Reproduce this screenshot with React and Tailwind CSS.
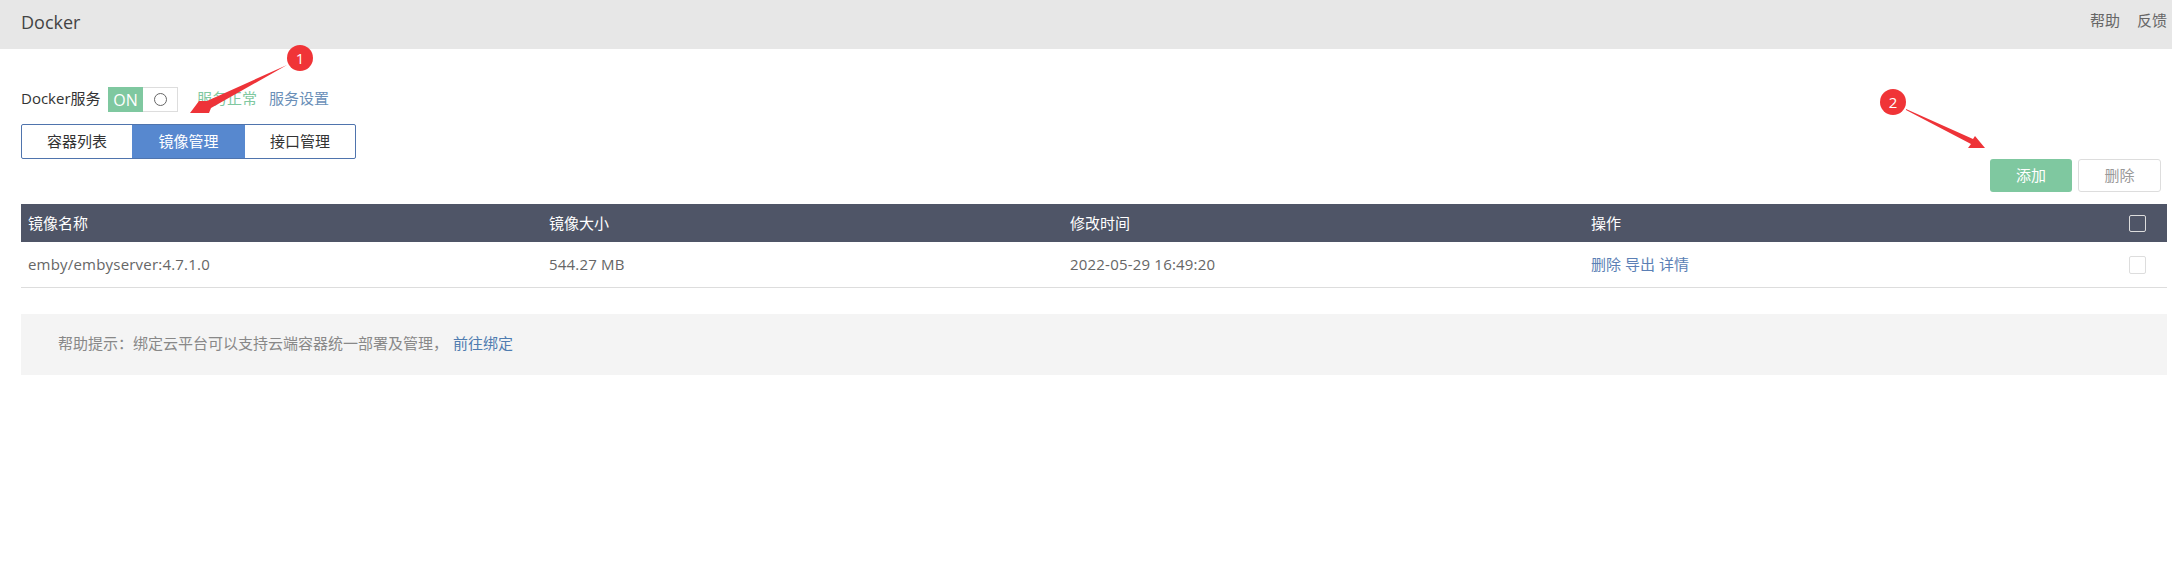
const font = { fontFamily: '"Open Sans", "Noto Sans CJK SC", sans-serif' };

function Marker({ n, className }) {
  return (
    <div className={"absolute w-[26px] h-[26px] rounded-full bg-[#f03437] text-white text-[15px] leading-[26px] text-center " + className}>
      {n}
    </div>
  );
}

function Arrows() {
  return (
    <svg className="absolute left-0 top-0 pointer-events-none" width="2172" height="567">
      <polygon fill="#ee3338" points="287,65 207,101 199,101 190,113 209,113 211,108" />
      <polygon fill="#ee3338" points="1906,109 1973,139 1975,136 1985,148 1968,148 1971,144 1906,110" />
    </svg>
  );
}

export default function App() {
  return (
    <div className="relative h-[567px] bg-white text-[15px] text-[#555] overflow-hidden" style={font}>
      <div className="h-[49px] bg-[#e7e7e7] flex items-center justify-between pl-[21px] pr-[5px]">
        <span className="text-[18px] text-[#444] mb-[5px]">Docker</span>
        <div className="flex gap-[17px] text-[#666] mb-[9px]">
          <span>帮助</span>
          <span>反馈</span>
        </div>
      </div>

      <div className="px-[21px] pr-[5px]">
        <div className="flex items-center h-[25px] mt-[38px]">
          <span className="text-[#333] w-[87px] mb-[3px]">Docker服务</span>
          <div className="flex w-[70px] h-[25px] border border-[#ddd]">
            <div className="w-[35px] bg-[#7fc8a0] text-white flex items-center justify-center text-[16px] -m-[1px] mr-0 h-[25px]">ON</div>
            <div className="flex-1 flex items-center justify-center">
              <div className="w-[13px] h-[13px] rounded-full border border-[#666]"></div>
            </div>
          </div>
          <span className="ml-[19px] mb-[3px] text-[#7fc8a0]">服务正常</span>
          <a className="ml-[12px] mb-[3px] text-[#6a8fb8]">服务设置</a>
        </div>

        <div className="flex justify-between items-start mt-[12px]">
          <div className="flex w-[335px] h-[35px] border border-[#4f74ad] rounded-[2px] text-[#333]">
            <div className="w-[110px] flex items-center justify-center">容器列表</div>
            <div className="w-[113px] bg-[#5788cf] text-white flex items-center justify-center">镜像管理</div>
            <div className="flex-1 flex items-center justify-center">接口管理</div>
          </div>
          <div className="flex gap-[6px] mt-[35px] mr-[6px]">
            <button className="w-[82px] h-[33px] rounded-[3px] bg-[#7fc8a0] text-white">添加</button>
            <button className="w-[83px] h-[33px] rounded-[3px] border border-[#ddd] text-[#999]">删除</button>
          </div>
        </div>

        <div className="mt-[12px]">
          <div className="grid grid-cols-[521px_521px_521px_1fr] h-[38px] items-center bg-[#4f5567] text-white pl-[7px]">
            <div>镜像名称</div>
            <div>镜像大小</div>
            <div>修改时间</div>
            <div className="flex justify-between items-center pr-[21px]">
              <span>操作</span>
              <div className="w-[17px] h-[17px] rounded-[2px] border border-[#ddd]"></div>
            </div>
          </div>
          <div className="grid grid-cols-[521px_521px_521px_1fr] h-[46px] items-center border-b border-[#ddd] pl-[7px] text-[#666]">
            <div className="tracking-[0.2px]">emby/embyserver:4.7.1.0</div>
            <div className="tracking-[0.2px]">544.27 MB</div>
            <div className="tracking-[0.2px]">2022-05-29 16:49:20</div>
            <div className="flex justify-between items-center pr-[21px]">
              <div className="flex gap-[4px] text-[#5b7fb5]">
                <a>删除</a>
                <a>导出</a>
                <a>详情</a>
              </div>
              <div className="w-[17px] h-[18px] rounded-[2px] border border-[#ddd]"></div>
            </div>
          </div>
        </div>

        <div className="mt-[26px] h-[61px] bg-[#f4f4f4] flex items-center pl-[37px] text-[#888]">
          <span className="mb-[2px]">帮助提示{"\uFF1A"}绑定云平台可以支持云端容器统一部署及管理{"\uFF0C"}</span>
          <a className="ml-[5px] mb-[2px] text-[#4f7cb0]">前往绑定</a>
        </div>
      </div>

      <Arrows />
      <Marker n="1" className="left-[287px] top-[45px]" />
      <Marker n="2" className="left-[1880px] top-[89px]" />
    </div>
  );
}
